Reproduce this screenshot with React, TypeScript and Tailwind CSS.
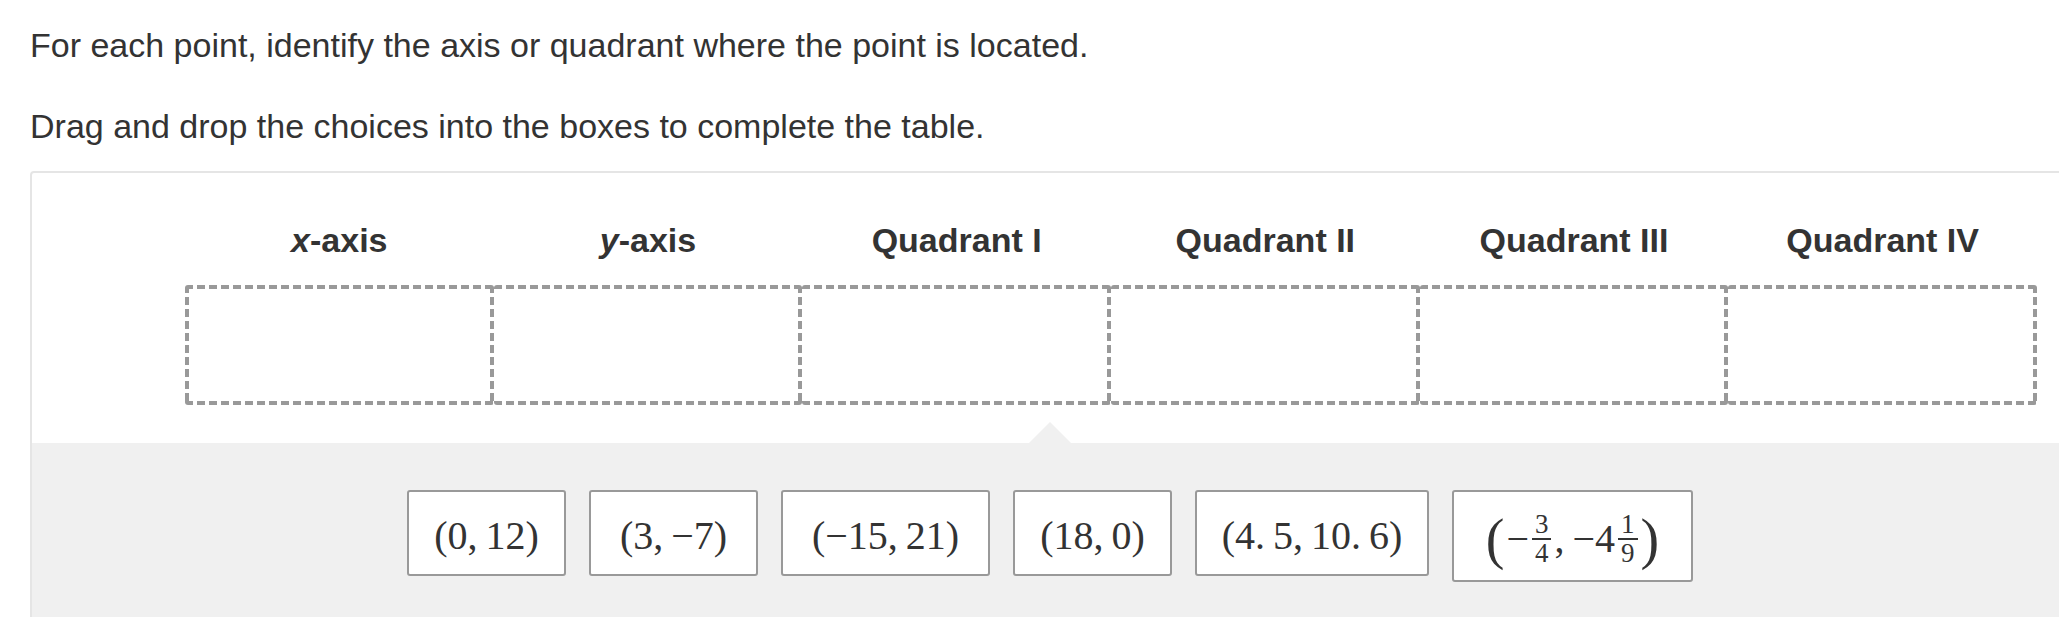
import React from 'react'

const headers: React.ReactNode[] = [
  <><i>x</i>-axis</>,
  <><i>y</i>-axis</>,
  'Quadrant I',
  'Quadrant II',
  'Quadrant III',
  'Quadrant IV',
]

// dashed outline drawn with gradients so the dash length matches the original
const dashTB =
  '[background:repeating-linear-gradient(90deg,#999_0_8px,transparent_8px_12px)_top/100%_4px_no-repeat,repeating-linear-gradient(90deg,#999_0_8px,transparent_8px_12px)_bottom/100%_4px_no-repeat,repeating-linear-gradient(180deg,#999_0_8px,transparent_8px_12px)_right/4px_100%_no-repeat]'
const dashAll =
  '[background:repeating-linear-gradient(90deg,#999_0_8px,transparent_8px_12px)_top/100%_4px_no-repeat,repeating-linear-gradient(90deg,#999_0_8px,transparent_8px_12px)_bottom/100%_4px_no-repeat,repeating-linear-gradient(180deg,#999_0_8px,transparent_8px_12px)_right/4px_100%_no-repeat,repeating-linear-gradient(180deg,#999_0_8px,transparent_8px_12px)_left/4px_100%_no-repeat]'

const Frac: React.FC<{ num: string; den: string }> = ({ num, den }) => (
  <span className="mx-[3px] inline-flex flex-col items-center text-[27px] leading-[27px]">
    <span className="px-[3px]">{num}</span>
    <span className="h-[1.5px] self-stretch bg-[#333]" />
    <span className="px-[3px]">{den}</span>
  </span>
)

const choices: { size: string; content: React.ReactNode }[] = [
  { size: 'w-[159px] h-[86px]', content: <span>(0,{'\u2009'}12)</span> },
  { size: 'w-[169px] h-[86px]', content: <span>(3,{'\u2009'}−7)</span> },
  { size: 'w-[209px] h-[86px]', content: <span>(−15,{'\u2009'}21)</span> },
  { size: 'w-[159px] h-[86px]', content: <span>(18,{'\u2009'}0)</span> },
  { size: 'w-[234px] h-[86px]', content: <span>(4.{'\u2009'}5,{'\u2009'}10.{'\u2009'}6)</span> },
  {
    size: 'w-[241px] h-[92px]',
    content: (
      <span className="flex items-center">
        <span className="text-[56px] leading-none">(</span>
        <span className="ml-[2px]">−</span>
        <Frac num="3" den="4" />
        <span>,{'\u2009'}−4</span>
        <Frac num="1" den="9" />
        <span className="text-[56px] leading-none">)</span>
      </span>
    ),
  },
]

export default function App() {
  return (
    <div className="min-h-screen overflow-hidden bg-white font-['Liberation_Sans',Arial,sans-serif] text-[#333]">
      <div className="pl-[30px] pt-[25px]">
        <p className="text-[34px] leading-[40px]">
          For each point, identify the axis or quadrant where the point is located.
        </p>
        <p className="mt-[41px] text-[34px] leading-[40px]">
          Drag and drop the choices into the boxes to complete the table.
        </p>

        <div className="mt-[25px] w-[2040px] rounded-[4px] border-2 border-[#e5e5e5]">
          <div className="pl-[153px] pt-[47px] pb-[38px]">
            <div className="grid w-[1852px] grid-cols-6">
              {headers.map((h, i) => (
                <div key={i} className="text-center text-[34px] font-bold leading-[40px] text-[#333]">
                  {h}
                </div>
              ))}
            </div>
            <div className="mt-[25px] grid w-[1852px] grid-cols-6">
              {headers.map((_, i) => (
                <div key={i} className={`h-[120px] rounded-[3px] ${i === 0 ? dashAll : dashTB}`} />
              ))}
            </div>
          </div>

          <div className="relative flex items-start justify-center gap-[23px] bg-[#f0f0f0] pt-[47px] pb-[40px]">
            <div className="absolute -top-[21px] left-1/2 h-0 w-0 -translate-x-1/2 border-x-[21px] border-b-[21px] border-x-transparent border-b-[#f0f0f0]" />
            {choices.map((c, i) => (
              <div
                key={i}
                className={`${c.size} flex items-center justify-center rounded-[3px] border-2 border-[#999] bg-white pt-[6px] font-['Liberation_Serif','Times_New_Roman',serif] text-[40px] leading-none text-[#333]`}
              >
                {c.content}
              </div>
            ))}
          </div>
        </div>
      </div>
    </div>
  )
}
